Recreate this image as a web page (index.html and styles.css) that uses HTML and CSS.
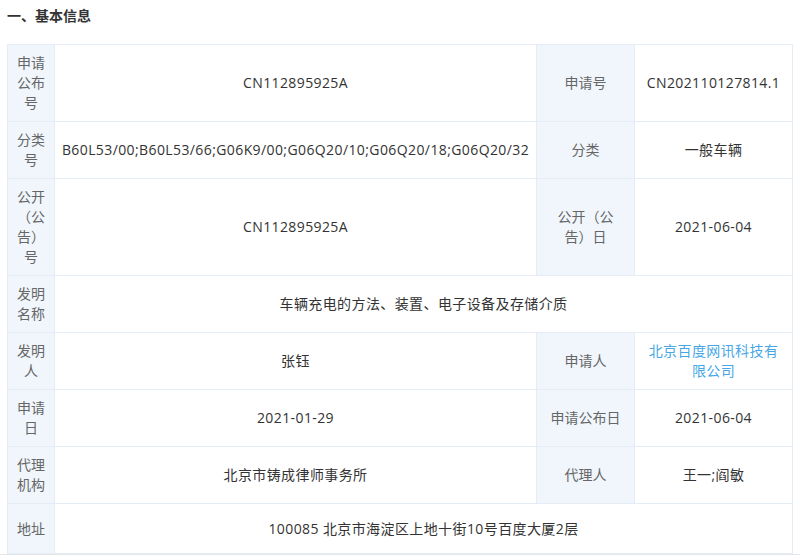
FILE: index.html
```html
<!DOCTYPE html>
<html lang="zh-CN">
<head>
<meta charset="utf-8">
<title>基本信息</title>
<link rel="stylesheet" href="styles.css">
</head>
<body>
<div class="page">
  <h2 class="title">一、基本信息</h2>
  <table class="info">
    <colgroup>
      <col class="c1"><col class="c2"><col class="c3"><col class="c4">
    </colgroup>
    <tbody>
      <tr>
        <th class="k">申请公布号</th>
        <td class="v">CN112895925A</td>
        <th class="k k-wide">申请号</th>
        <td class="v">CN202110127814.1</td>
      </tr>
      <tr>
        <th class="k">分类号</th>
        <td class="v v-wide">B60L53/00;B60L53/66;G06K9/00;G06Q20/10;G06Q20/18;G06Q20/32</td>
        <th class="k k-wide">分类</th>
        <td class="v">一般车辆</td>
      </tr>
      <tr>
        <th class="k">公开（公告）号</th>
        <td class="v">CN112895925A</td>
        <th class="k k-wide">公开（公告）日</th>
        <td class="v">2021-06-04</td>
      </tr>
      <tr>
        <th class="k">发明名称</th>
        <td class="v" colspan="3">车辆充电的方法、装置、电子设备及存储介质</td>
      </tr>
      <tr>
        <th class="k">发明人</th>
        <td class="v">张钰</td>
        <th class="k k-wide">申请人</th>
        <td class="v"><a class="link" href="#">北京百度网讯科技有限公司</a></td>
      </tr>
      <tr>
        <th class="k">申请日</th>
        <td class="v">2021-01-29</td>
        <th class="k k-wide">申请公布日</th>
        <td class="v">2021-06-04</td>
      </tr>
      <tr>
        <th class="k">代理机构</th>
        <td class="v">北京市铸成律师事务所</td>
        <th class="k k-wide">代理人</th>
        <td class="v">王一;阎敏</td>
      </tr>
      <tr>
        <th class="k">地址</th>
        <td class="v" colspan="3">100085 北京市海淀区上地十街10号百度大厦2层</td>
      </tr>
      <tr>
        <th class="k"></th>
        <td class="v"></td>
        <th class="k k-wide"></th>
        <td class="v"></td>
      </tr>
    </tbody>
  </table>
</div>
</body>
</html>
```
FILE: styles.css
```css
html, body {
  margin: 0;
  padding: 0;
  background: #ffffff;
}

body {
  font-family: "Open Sans", "Noto Sans CJK SC", sans-serif;
  font-size: 14px;
  line-height: 20px;
  color: #333333;
}

.page {
  height: 555px;
  overflow: hidden;
  border-bottom: 1px solid #e6e6e6;
  padding: 6px 8px 0 7px;
  box-sizing: border-box;
}

.title {
  margin: 0 0 18px 0;
  font-size: 14px;
  line-height: 20px;
  font-weight: bold;
  color: #333333;
}

.info {
  width: 785px;
  table-layout: fixed;
  border-collapse: collapse;
}

.c1 { width: 47px; }
.c2 { width: 482px; }
.c3 { width: 98px; }
.c4 { width: 158px; }

.info tr {
  height: 50px;
}

.info th,
.info td {
  border: 1px solid #e4edf6;
  text-align: center;
  vertical-align: middle;
  font-size: 14px;
  line-height: 20px;
}

.k {
  background: #f0f6fc;
  color: #666666;
  font-weight: normal;
  padding: 8px;
}

.k-wide {
  padding: 8px 12px;
}

.v {
  background: #ffffff;
  color: #333333;
  padding: 8px 10px;
  letter-spacing: 0.4px;
}

.v-wide {
  padding: 8px 4px;
}

.link {
  color: #47a7e6;
  text-decoration: none;
}
```
